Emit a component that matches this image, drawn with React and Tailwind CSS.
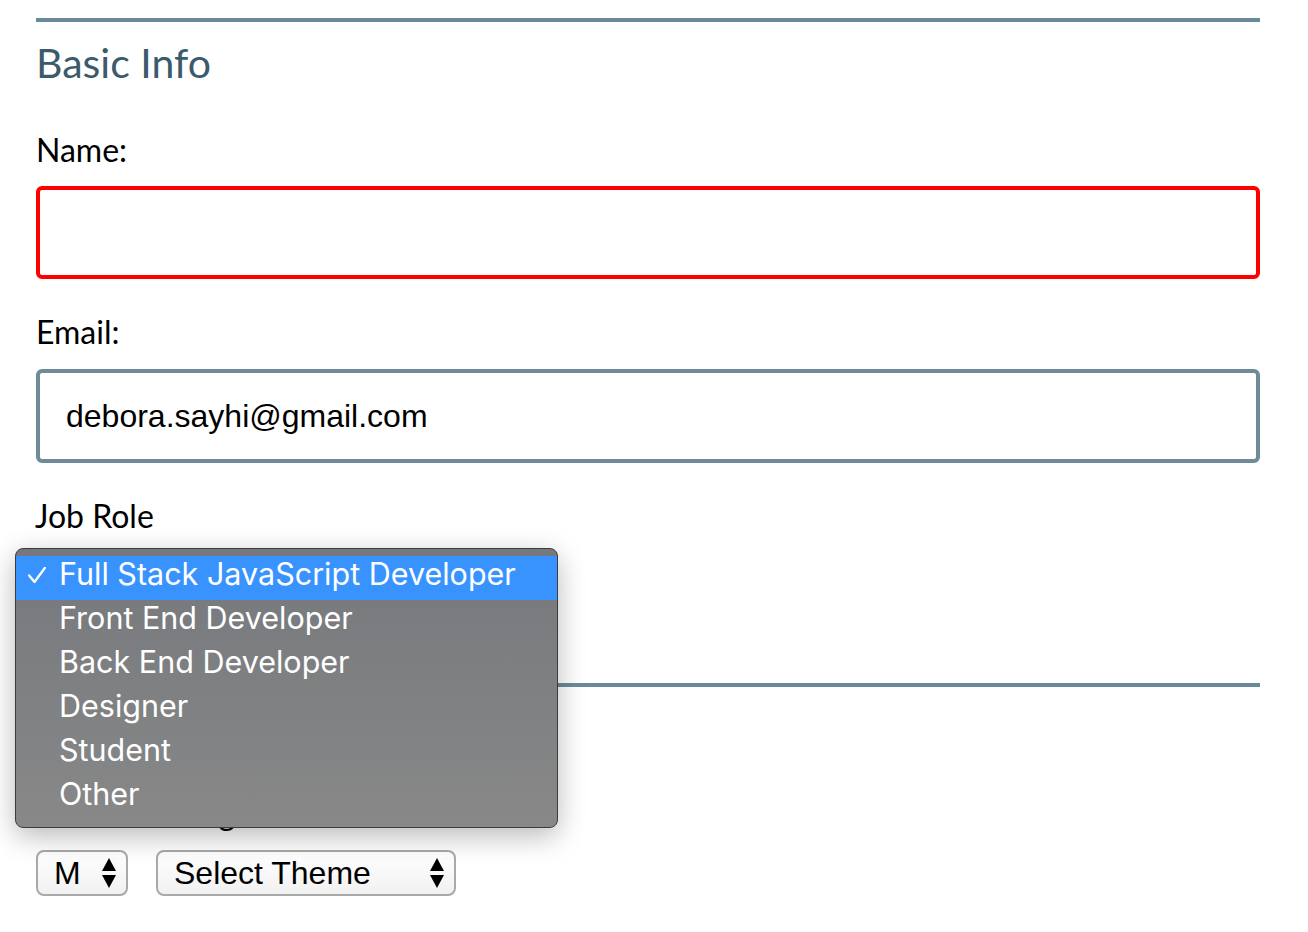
import React from "react";

const label = "font-['Lato',sans-serif] text-[32px] leading-[40px] text-black";

function Arrows() {
  return (
    <svg width="14" height="30" viewBox="0 0 14 30" className="shrink-0">
      <polygon points="7,0 14,13 0,13" fill="#000" />
      <polygon points="0,17 14,17 7,30" fill="#000" />
    </svg>
  );
}

function Select({ text, width }) {
  return (
    <div
      className={`flex h-[46px] items-center justify-between rounded-[8px] border-2 border-[#a9a9a9] bg-gradient-to-b from-white to-[#f1f1f1] pl-[16px] pr-[10px] ${width}`}
    >
      <span className="font-['Liberation_Sans',Arial,sans-serif] text-[32px] leading-none text-black">
        {text}
      </span>
      <Arrows />
    </div>
  );
}

const roles = [
  "Full Stack JavaScript Developer",
  "Front End Developer",
  "Back End Developer",
  "Designer",
  "Student",
  "Other",
];

export default function App() {
  return (
    <div className="relative min-h-[932px] w-[1308px] bg-white">
      <div className="ml-[36px] w-[1224px] pt-[18px]">
        <div className="h-[4px] bg-[#6b8a99]" />
        <h2 className="mt-[15px] font-['Lato',sans-serif] text-[41px] leading-[52px] text-[#3b5a6c]">
          Basic Info
        </h2>
        <div className={`${label} mt-[41px]`}>Name:</div>
        <div className="mt-[16px] h-[93px] rounded-[6px] border-4 border-[#ff0000] bg-white" />
        <div className={`${label} mt-[33px]`}>Email:</div>
        <div className="mt-[17px] flex h-[94px] items-center rounded-[6px] border-4 border-[#6f8a99] bg-white pl-[26px]">
          <span className="font-['Liberation_Sans',Arial,sans-serif] text-[32px] leading-none text-black">
            debora.sayhi@gmail.com
          </span>
        </div>
        <div className={`${label} mt-[33px] -ml-[1px]`}>Job Role</div>
        <div className="mt-[147px] h-[4px] bg-[#6b8a99]" />
        <div className="mt-[106px] flex gap-[28px]">
          <div className="flex w-[92px] flex-col">
            <div className="h-[40px]" />
            <div className="mt-[17px]">
              <Select text="M" width="w-[92px]" />
            </div>
          </div>
          <div className="flex w-[300px] flex-col">
            <div className={label}>Design:</div>
            <div className="mt-[17px]">
              <Select text="Select Theme" width="w-[300px]" />
            </div>
          </div>
        </div>
      </div>

      {/* open native select popup */}
      <div className="absolute left-[15px] top-[548px] h-[280px] w-[543px] rounded-[8px] border border-[#3c3c3c] bg-gradient-to-b from-[#75787c] to-[#888888] py-[7px] shadow-[0_8px_28px_rgba(0,0,0,0.28)]">
        {roles.map((r, i) => (
          <div
            key={r}
            className={`flex h-[44px] items-center pb-[7px] font-['Inter',sans-serif] text-[30.5px] leading-none text-white ${
              i === 0 ? "bg-[#3893ff]" : ""
            }`}
          >
            <span className="flex w-[43px] justify-end pr-[13px]">
              {i === 0 ? (
                <svg width="18" height="16" viewBox="0 0 18 16">
                  <polyline
                    points="1.2,8.5 6.5,15 16.8,1"
                    fill="none"
                    stroke="#fff"
                    strokeWidth="2.3"
                    strokeLinecap="round"
                    strokeLinejoin="round"
                  />
                </svg>
              ) : null}
            </span>
            <span>{r}</span>
          </div>
        ))}
      </div>
    </div>
  );
}
